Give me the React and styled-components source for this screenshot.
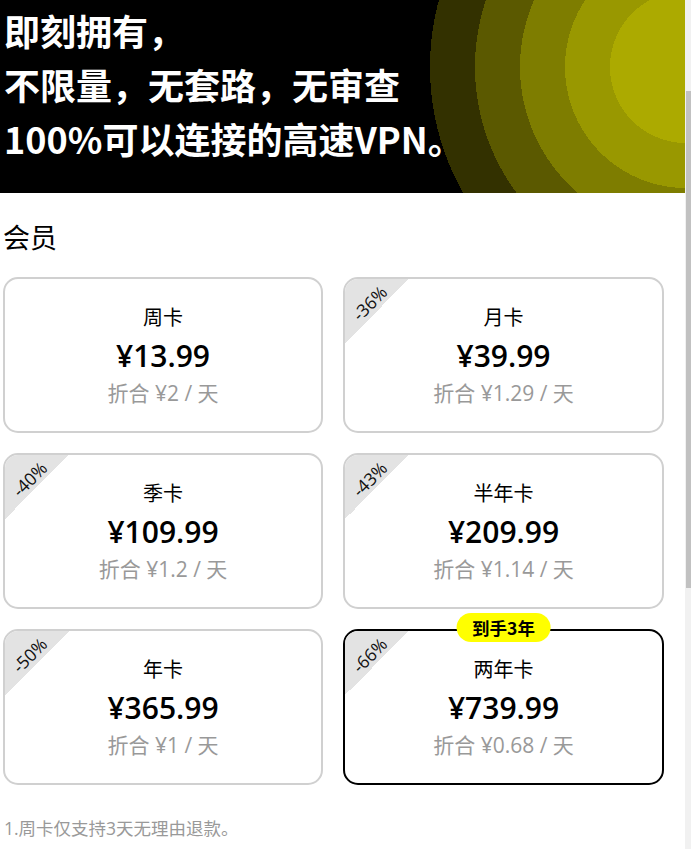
import React from "react";
import styled, { createGlobalStyle } from "styled-components";

const GlobalStyle = createGlobalStyle`
  html, body { margin: 0; padding: 0; background: #fff; }
  body { font-family: "Open Sans", "Noto Sans CJK SC", sans-serif; }
  * { box-sizing: border-box; }
`;

const Shell = styled.div`
  display: flex;
  height: 100vh;
  overflow: hidden;
  background: #fff;
`;

const Main = styled.main`
  flex: 1;
  min-width: 0;
`;

const ScrollTrack = styled.div`
  width: 6px;
  flex: none;
  background: #f1f1f1;
  padding: 91px 0 0 1px;
`;

const ScrollThumb = styled.div`
  height: 497px;
  background: #c1c1c1;
`;

const Banner = styled.header`
  padding: 3px 0 28px 4px;
  background: radial-gradient(
    circle at 686px 67px,
    #acaa00 0 76px,
    #999800 76px 121px,
    #7e7d00 121px 166px,
    #5b5900 166px 211px,
    #333100 211px 256px,
    #000 256px
  );
`;

const Headline = styled.h1`
  margin: 0;
  color: #fff;
  font-family: "Noto Sans CJK SC", sans-serif;
  font-weight: 700;
  font-size: 36px;
  line-height: 54px;
`;

const SectionTitle = styled.h2`
  margin: 26px 0 22px 3px;
  font-family: "Noto Sans CJK SC", sans-serif;
  font-weight: 400;
  font-size: 27px;
  line-height: 36px;
  color: #000;
`;

const Grid = styled.div`
  display: grid;
  grid-template-columns: 320px 321px;
  column-gap: 20px;
  row-gap: 20px;
  padding-left: 3px;
`;

const Card = styled.div`
  position: relative;
  height: 156px;
  border: 2px solid ${(p) => (p.$selected ? "#000" : "#d0d0d0")};
  border-radius: 15px;
  display: flex;
  flex-direction: column;
  align-items: center;
  justify-content: center;
  background: #fff;
`;

const Corner = styled.div`
  position: absolute;
  top: 0;
  left: 0;
  width: 64px;
  height: 64px;
  border-top-left-radius: 13px;
  background: linear-gradient(135deg, #e3e3e3 50%, transparent 50%);
`;

const Off = styled.span`
  position: absolute;
  top: 0;
  left: 0;
  width: 48px;
  height: 47px;
  display: flex;
  align-items: center;
  justify-content: center;
  transform: rotate(-45deg);
  font-size: 17.5px;
  color: #111;
  font-weight: 400;
  white-space: nowrap;
`;

const Tag = styled.span`
  position: absolute;
  top: -18px;
  left: 50%;
  transform: translateX(-50%);
  height: 29px;
  padding: 0 16px;
  border-radius: 15px;
  background: #ffff00;
  color: #000;
  font-family: "Noto Sans CJK SC", sans-serif;
  font-weight: 700;
  font-size: 17.5px;
  line-height: 29px;
  white-space: nowrap;
`;

const Name = styled.div`
  font-size: 20px;
  line-height: 28px;
  color: #000;
`;

const Price = styled.div`
  font-size: 30px;
  line-height: 48px;
  font-weight: 600;
  color: #000;
`;

const Daily = styled.div`
  font-size: 21px;
  line-height: 26px;
  color: #999;
`;

const Note = styled.p`
  margin: 31px 0 0 4px;
  font-size: 17.5px;
  line-height: 24px;
  color: #999;
`;

const plans = [
  { name: "周卡", price: "¥13.99", daily: "折合 ¥2 / 天" },
  { name: "月卡", price: "¥39.99", daily: "折合 ¥1.29 / 天", off: "-36%" },
  { name: "季卡", price: "¥109.99", daily: "折合 ¥1.2 / 天", off: "-40%" },
  { name: "半年卡", price: "¥209.99", daily: "折合 ¥1.14 / 天", off: "-43%" },
  { name: "年卡", price: "¥365.99", daily: "折合 ¥1 / 天", off: "-50%" },
  { name: "两年卡", price: "¥739.99", daily: "折合 ¥0.68 / 天", off: "-66%", selected: true, tag: "到手3年" },
];

export default function App() {
  return (
    <>
      <GlobalStyle />
      <Shell>
        <Main>
          <Banner>
            <Headline>
              即刻拥有，
              <br />
              不限量，无套路，无审查
              <br />
              100%可以连接的高速VPN。
            </Headline>
          </Banner>
          <SectionTitle>会员</SectionTitle>
          <Grid>
            {plans.map((p) => (
              <Card key={p.name} $selected={p.selected}>
                {p.off && (
                  <Corner>
                    <Off>{p.off}</Off>
                  </Corner>
                )}
                {p.tag && <Tag>{p.tag}</Tag>}
                <Name>{p.name}</Name>
                <Price>{p.price}</Price>
                <Daily>{p.daily}</Daily>
              </Card>
            ))}
          </Grid>
          <Note>1.周卡仅支持3天无理由退款。</Note>
        </Main>
        <ScrollTrack>
          <ScrollThumb />
        </ScrollTrack>
      </Shell>
    </>
  );
}
